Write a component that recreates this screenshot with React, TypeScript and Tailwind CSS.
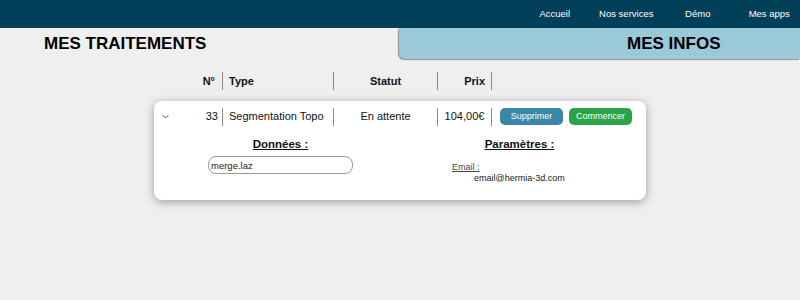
import React from "react";

const font = { fontFamily: '"Liberation Sans", Arial, sans-serif' };

const Sep: React.FC = () => <div className="w-px h-[18px] bg-[#8a8a8a]" />;

const App: React.FC = () => {
  return (
    <div className="w-[800px] h-[300px] bg-[#efefef] overflow-hidden text-[#111]" style={font}>
      {/* Top nav */}
      <nav className="h-[28px] bg-[#02405a] flex justify-end items-center overflow-hidden">
        <div className="flex -mr-[5px] text-white text-[9.5px]">
          <a className="w-[71.5px] text-center">Accueil</a>
          <a className="w-[71.5px] text-center">Nos services</a>
          <a className="w-[71.5px] text-center">Démo</a>
          <a className="w-[71.5px] text-center">Mes apps</a>
        </div>
      </nav>

      {/* Tabs */}
      <div className="flex h-[31px]">
        <div className="w-[399px] flex items-center pl-[44px]">
          <h2 className="text-[17px] font-bold text-black">MES TRAITEMENTS</h2>
        </div>
        <div className="flex-1 flex items-center pl-[228px] bg-[#9ac9d9] rounded-bl-[6px] shadow-[-1px_1px_1px_rgba(0,0,0,0.4)]">
          <h2 className="text-[17px] font-bold text-black">MES INFOS</h2>
        </div>
      </div>

      {/* Table header */}
      <div className="mt-[13px] ml-[154px] flex items-center h-[18px] text-[11px] font-bold">
        <div className="w-[68px] text-right pr-[7px]">N°</div>
        <Sep />
        <div className="w-[110px] pl-[6px]">Type</div>
        <Sep />
        <div className="w-[103px] text-center">Statut</div>
        <Sep />
        <div className="w-[53px] text-right pr-[6px]">Prix</div>
        <Sep />
      </div>

      {/* Card */}
      <div className="mt-[11px] ml-[154px] w-[492px] h-[99px] bg-white rounded-[8px] shadow-[0_2px_10px_rgba(0,0,0,0.35)] pt-[7px]">
        <div className="flex items-center h-[17px] text-[11px]">
          <div className="w-[68px] flex items-center justify-between pl-[8px] pr-[4px]">
            <svg width="7" height="5" viewBox="0 0 7 5" fill="none" stroke="#555" strokeWidth="1">
              <path d="M0.5 1 L3.5 4 L6.5 1" />
            </svg>
            <span>33</span>
          </div>
          <Sep />
          <div className="w-[110px] pl-[6px]">Segmentation Topo</div>
          <Sep />
          <div className="w-[103px] text-center">En attente</div>
          <Sep />
          <div className="w-[53px] text-center">104,00€</div>
          <Sep />
          <div className="flex gap-[6px] ml-[8px]">
            <button className="w-[63px] h-[17px] rounded-[5px] bg-[#3a87a9] text-white text-[9px]">Supprimer</button>
            <button className="w-[63px] h-[17px] rounded-[5px] bg-[#2aa448] text-white text-[9px]">Commencer</button>
          </div>
        </div>

        <div className="grid grid-cols-2 px-[7px] mt-[12px]">
          <div className="flex flex-col items-center">
            <h3 className="text-[11.5px] leading-[14px] font-bold underline">Données :</h3>
            <input
              readOnly
              defaultValue="merge.laz"
              className="mt-[5px] w-[145px] h-[18px] border border-[#9a9a9a] rounded-[8px] px-[2px] text-[9.5px] text-[#222] outline-none"
              style={font}
            />
          </div>
          <div className="flex flex-col">
            <h3 className="text-[11.5px] leading-[14px] font-bold underline text-center">Paramètres :</h3>
            <div className="mt-[11px] pl-[52px] text-[9px] leading-[11px]">
              <div className="text-[#444] underline">Email :</div>
              <div className="pl-[22px] text-[#222]">email@hermia-3d.com</div>
            </div>
          </div>
        </div>
      </div>
    </div>
  );
};

export default App;
